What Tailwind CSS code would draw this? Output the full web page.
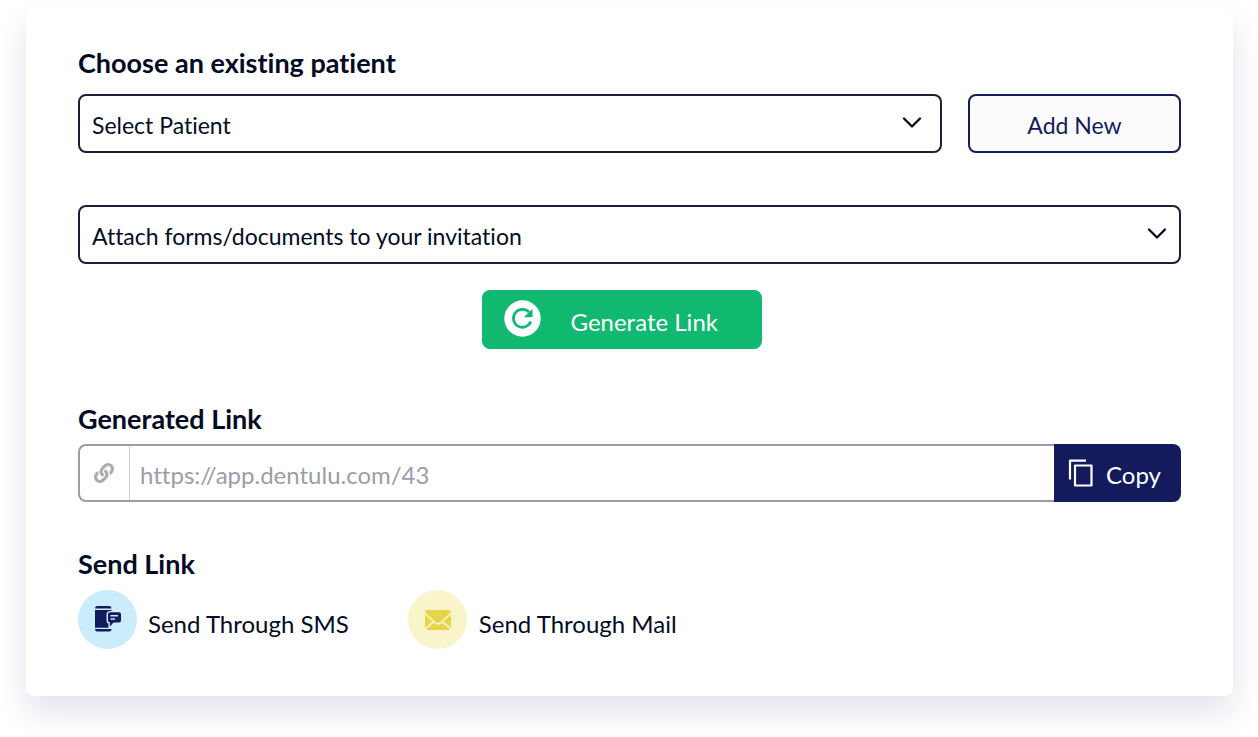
<!DOCTYPE html>
<html lang="en">
<head>
<meta charset="utf-8">
<meta name="viewport" content="width=device-width, initial-scale=1">
<title>Invite a patient</title>
<script src="https://cdn.jsdelivr.net/npm/@tailwindcss/browser@4"></script>
</head>
<body class="bg-white pr-[25px] pl-[26px] pt-2 pb-10 font-['Lato',sans-serif] text-[24px] leading-8 text-[#020b24] [font-variant-ligatures:none]">
<main class="rounded-lg bg-white px-[52px] pt-[39px] pb-[47px] shadow-[0_16px_32px_rgba(20,26,90,0.12)]">
  <form>
    <label for="patient" class="block text-[27px] leading-8 font-bold">Choose an existing patient</label>
    <div class="mt-[15px] flex gap-[26px]">
      <div class="relative grow">
        <select id="patient" class="block h-[59px] w-full appearance-none rounded-lg border-2 border-[#1a2038] bg-white pt-[2px] pr-12 pl-3 text-[23px] [font-variant-ligatures:none]">
          <option>Select Patient</option>
        </select>
        <svg class="pointer-events-none absolute top-[22px] right-5" width="20" height="14" viewBox="0 0 20 14" fill="none" stroke="#020b24" stroke-width="2.3" stroke-linecap="round" stroke-linejoin="round"><path d="M2 2.5l8 8 8-8"/></svg>
      </div>
      <button type="button" class="h-[59px] w-[213px] rounded-lg border-2 border-[#141b5c] bg-[#fbfbfb] pt-[2px] text-[23px] text-[#141b5c]">Add New</button>
    </div>
    <div class="relative mt-[52px]">
      <select aria-label="Attach forms/documents to your invitation" class="block h-[59px] w-full appearance-none rounded-lg border-2 border-[#1a2038] bg-white pt-[2px] pr-12 pl-3 text-[23px] [font-variant-ligatures:none]">
        <option>Attach forms/documents to your invitation</option>
      </select>
      <svg class="pointer-events-none absolute top-[22px] right-[14px]" width="20" height="14" viewBox="0 0 20 14" fill="none" stroke="#020b24" stroke-width="2.3" stroke-linecap="round" stroke-linejoin="round"><path d="M2 2.5l8 8 8-8"/></svg>
    </div>
    <div class="mt-[26px] flex justify-center pr-4">
      <button type="button" class="flex h-[59px] w-[280px] items-center gap-[30px] rounded-lg bg-[#10b870] pb-[2px] pl-[22px] text-white">
        <svg width="37" height="37" viewBox="0 0 37 37" fill="none"><circle cx="18.500" cy="18.500" r="18.200" fill="#fff"/><path d="M26.800 21.600A9 9 0 1 1 25 12.200" stroke="#10b870" stroke-width="2.700"/><path d="M28.500 8.700v8.600h-8.600z" fill="#10b870"/></svg>
        <span class="pt-[6px]">Generate Link</span>
      </button>
    </div>
    <label for="link" class="mt-[54px] block text-[27px] leading-8 font-bold">Generated Link</label>
    <div class="mt-[9px] flex h-[58px]">
      <div class="flex min-w-0 grow rounded-l-lg border-2 border-r-0 border-[#9a9da9]">
        <span class="flex w-[50px] shrink-0 items-center justify-center border-r border-[#cfd1d6] pr-[2px]">
          <svg width="20" height="20" viewBox="0 0 512 512" fill="#acacac"><path d="M326.600 185.400c59.700 59.800 58.900 155.700.400 214.600-.100.100-.200.300-.400.400l-67.200 67.200c-59.300 59.300-155.700 59.300-215 0-59.300-59.300-59.300-155.700 0-215l37.100-37.100c9.800-9.800 26.800-3.300 27.300 10.600.600 17.700 3.800 35.500 9.700 52.700 2 5.800.600 12.300-3.800 16.600l-13.100 13.100c-28 28-28.900 73.700-1.200 102 28 28.600 74.100 28.700 102.300.500l67.200-67.200c28.200-28.200 28.100-73.800 0-101.800-3.700-3.700-7.400-6.600-10.300-8.600a16 16 0 0 1-6.900-12.600c-.400-10.600 3.300-21.500 11.700-29.800l21.100-21.100c5.500-5.500 14.200-6.200 20.600-1.700a152.500 152.500 0 0 1 20.500 17.200zM467.500 44.400c-59.300-59.300-155.700-59.300-215 0l-67.200 67.200c-.100.100-.300.300-.400.400-58.600 58.900-59.400 154.800.400 214.600a152.500 152.500 0 0 0 20.500 17.200c6.400 4.500 15.100 3.800 20.600-1.700l21.100-21.100c8.400-8.400 12.100-19.200 11.700-29.800a16 16 0 0 0-6.900-12.600c-2.900-2-6.600-4.900-10.300-8.600-28.100-28.100-28.200-73.600 0-101.800l67.200-67.200c28.200-28.200 74.300-28.100 102.300.5 27.800 28.300 26.900 73.900-1.200 102l-13.100 13.100c-4.400 4.400-5.800 10.800-3.800 16.600 5.900 17.200 9 35 9.700 52.700.5 13.900 17.500 20.400 27.300 10.600l37.100-37.100c59.300-59.300 59.300-155.700 0-215z"/></svg>
        </span>
        <input id="link" type="text" readonly value="https://app.dentulu.com/43" class="min-w-0 grow bg-white pt-1 pl-[10px] text-[#9b9da8] outline-none [font-variant-ligatures:none]">
      </div>
      <button type="button" class="flex w-[127px] shrink-0 items-center gap-3 rounded-r-lg bg-[#141b5c] pl-[14px] text-white">
        <svg width="26" height="28" viewBox="0 0 26 28" fill="none" stroke="#fff" stroke-width="2.200" stroke-linejoin="round"><path d="M18 1.600H2V20.500"/><rect x="7" y="6.500" width="16.500" height="20"/></svg>
        <span class="pt-1">Copy</span>
      </button>
    </div>
    <h2 class="mt-[46px] text-[27px] leading-8 font-bold">Send Link</h2>
    <div class="mt-[10px] flex gap-[59px]">
      <button type="button" class="flex items-center gap-[11px]">
        <span class="flex size-[59px] items-center justify-center rounded-full bg-[#caecfb] pr-[2px] pb-[2px]">
          <svg width="28" height="28" viewBox="0 0 28 28" fill="#141b5c"><path d="M2 3.500Q2 1 4 1h12q2.500 0 2.500 2.500zM2 5h16.500v1H17q-3.500 0-3.500 3.500v6q0 2.500 2 3v4.200H2zM2 24h16.500q0 2.500-2.500 2.500H4q-2 0-2-2.500z"/><path fill-rule="evenodd" d="M17 7.200H26q2 0 2 2v6.300q0 2-2 2h-5.500l-3.500 4v-4q-2 0-2-2V9.200q0-2 2-2zM17.500 10v1.600h7.500V10zm0 3.200v1.600h4.500v-1.600z"/></svg>
        </span>
        <span class="pt-2">Send Through SMS</span>
      </button>
      <button type="button" class="flex items-center gap-3">
        <span class="flex size-[59px] items-center justify-center rounded-full bg-[#faf4cb] pl-[2px]">
          <svg width="26" height="20" viewBox="0 0 26 20" fill="#e5d54a"><path d="M2.500 0h21Q26 0 26 2.300L15.500 12q-2.500 2-5 0L0 2.300Q0 0 2.500 0zM0 4.500l7.500 7L0 18zM26 4.500V18l-7.500-6.500zM8.800 12.700l1 .8q3.200 2.400 6.400 0l1-.8 7.600 6.600q-.500.700-1.300.7h-21q-.800 0-1.300-.7z"/></svg>
        </span>
        <span class="pt-2">Send Through Mail</span>
      </button>
    </div>
  </form>
</main>
</body>
</html>
